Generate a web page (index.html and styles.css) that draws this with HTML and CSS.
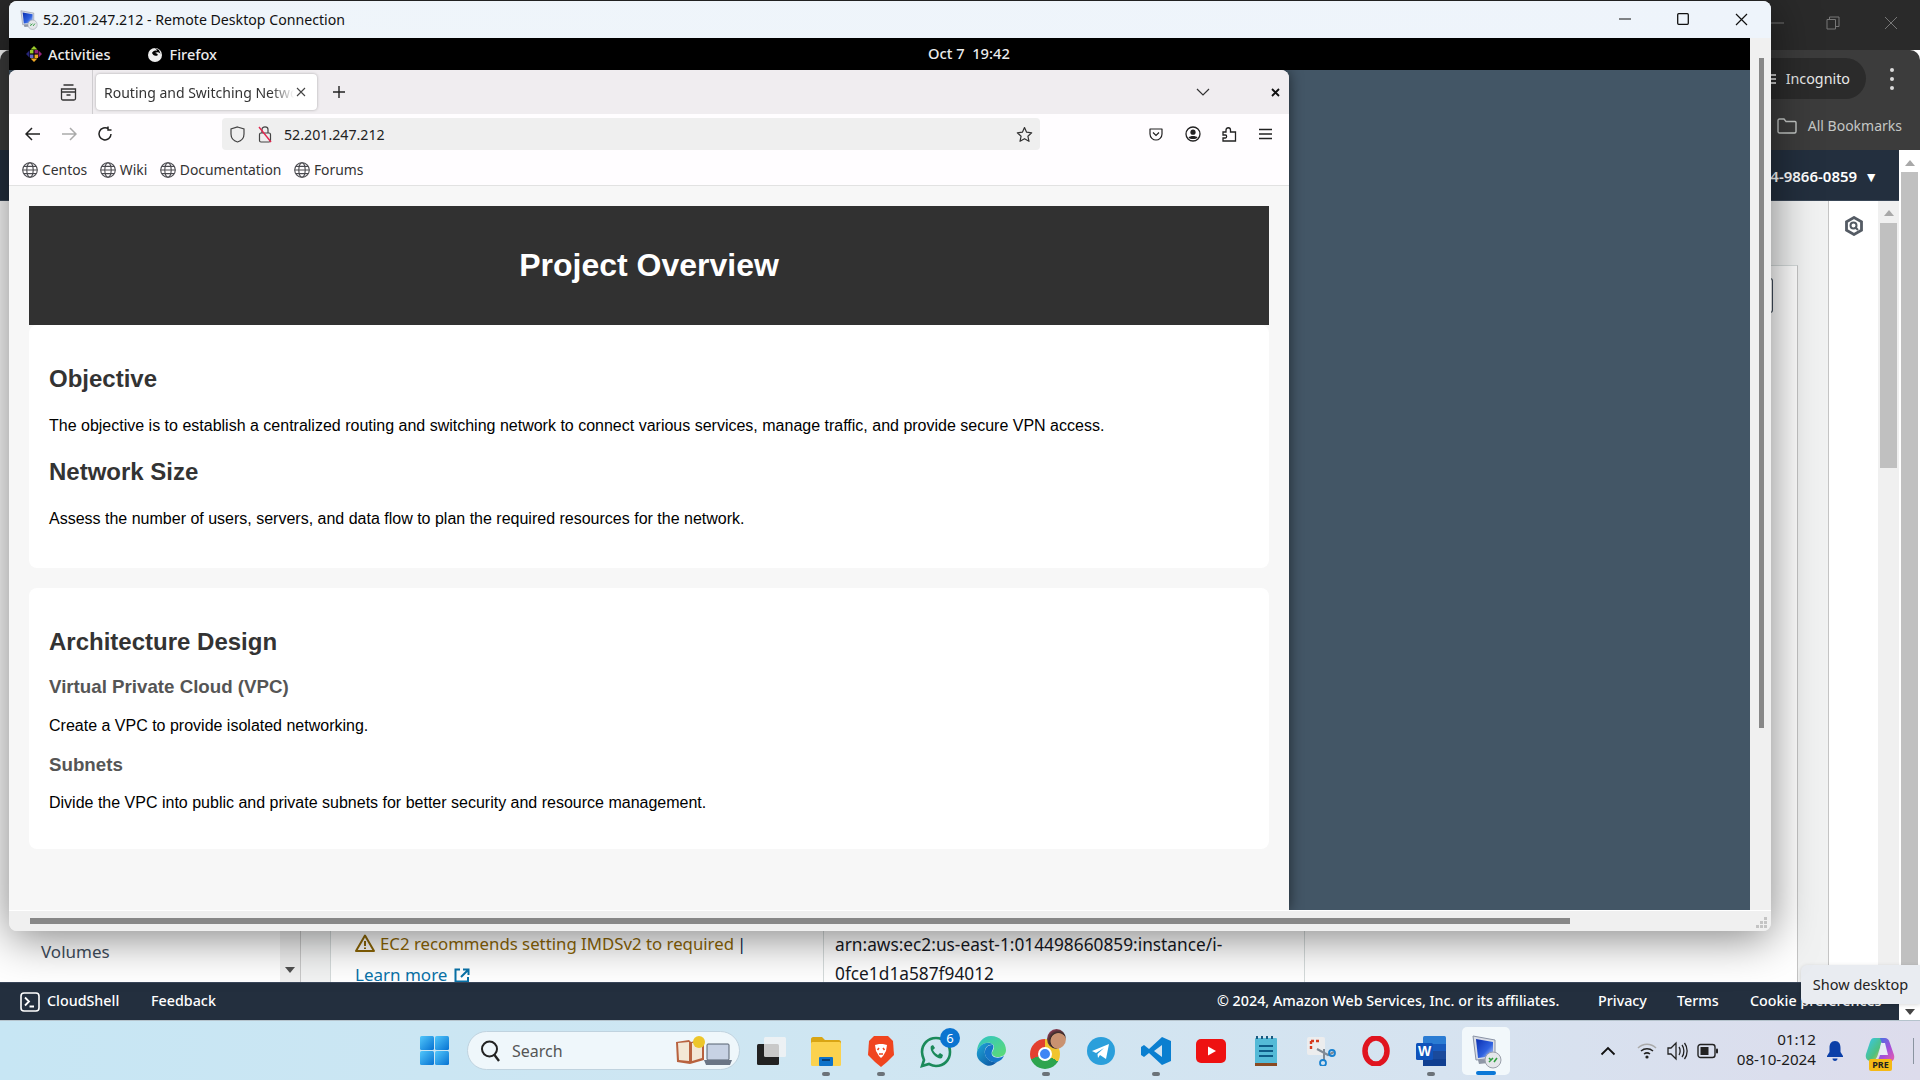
FILE: index.html
```html
<!DOCTYPE html>
<html lang="en">
<head>
<meta charset="utf-8">
<title>Remote Desktop</title>
<link rel="stylesheet" href="styles.css">
</head>
<body>
<svg class="defs" width="0" height="0">
  <defs>
    <linearGradient id="scr" x1="0" y1="0" x2="1" y2="1"><stop offset="0" stop-color="#0a2fb0"/><stop offset=".6" stop-color="#2f62e0"/><stop offset="1" stop-color="#cfdcf5"/></linearGradient>
    <linearGradient id="win" x1="0" y1="0" x2="1" y2="1"><stop offset="0" stop-color="#52c7fb"/><stop offset="1" stop-color="#0672d2"/></linearGradient>
    <linearGradient id="edgeA" x1="0" y1="0" x2="1" y2="1"><stop offset="0" stop-color="#1fa8d8"/><stop offset="1" stop-color="#0b4f9e"/></linearGradient>
    <linearGradient id="edgeB" x1="0" y1="0" x2="1" y2="1"><stop offset="0" stop-color="#2fc4c8"/><stop offset="1" stop-color="#5fdc70"/></linearGradient>
    <linearGradient id="copA" x1="0" y1="0" x2="1" y2="1"><stop offset="0" stop-color="#35c8f2"/><stop offset=".6" stop-color="#4fc07f"/><stop offset="1" stop-color="#f2c230"/></linearGradient>
    <linearGradient id="copB" x1="0" y1="0" x2="1" y2="1"><stop offset="0" stop-color="#2e7be6"/><stop offset=".6" stop-color="#a84fd8"/><stop offset="1" stop-color="#ec5fa8"/></linearGradient>
    <symbol id="rdp" viewBox="0 0 32 36">
      <path d="M3 3 L25 7 V25 L6 27 Z" fill="#d9dde6" stroke="#8a93a6" stroke-width="1"/>
      <path d="M6 6 L23 9 V23 L8 25 Z" fill="url(#scr)"/>
      <path d="M8 27 L18 26 V30 L9 31 Z" fill="#8f97a6"/>
      <circle cx="23" cy="27" r="8" fill="#e4e6ea" stroke="#9aa0aa"/>
      <path d="M19 29 L23 25 M24 29 L27 25 M19 25 L21 27" stroke="#2f9e3f" stroke-width="1.6" fill="none"/>
    </symbol>
    <symbol id="globe" viewBox="0 0 16 16">
      <g fill="none" stroke="#4a4a4f" stroke-width="1.1"><circle cx="8" cy="8" r="7.300"/><ellipse cx="8" cy="8" rx="3.200" ry="7.300"/><path d="M.7 8H15.300M1.800 4.400H14.200M1.800 11.600H14.200"/></g>
    </symbol>
  </defs>
</svg>

<div class="screen">
  <div class="chrome-top">
    <svg class="cw-min" width="14" height="2" viewBox="0 0 14 2"><path d="M0 1H14" stroke="#777"/></svg>
    <svg class="cw-res" width="14" height="14" viewBox="0 0 14 14"><path d="M1 3.5H9.5V13H1ZM3.5 3V1H13V10.5H10" fill="none" stroke="#777"/></svg>
    <svg class="cw-x" width="14" height="14" viewBox="0 0 14 14"><path d="M1 1L13 13M13 1L1 13" stroke="#777"/></svg>
  </div>
  <div class="chrome-bar">
    <div class="chrome-row1">
      <div class="incognito">
        <svg class="inc-ico" width="10" height="14" viewBox="0 0 10 14"><path d="M1 3H8M1 7H8M8 11H2" stroke="#c8c8c8" stroke-width="1.800"/></svg>
        <span>Incognito</span>
      </div>
      <div class="kebab"><i></i><i></i><i></i></div>
    </div>
    <div class="chrome-row2">
      <svg width="20" height="16" viewBox="0 0 20 16"><path d="M1 2.5C1 1.7 1.6 1 2.5 1H7L9 3.5H18C18.600 3.500 19 4 19 4.500V13.500C19 14.300 18.400 15 17.500 15H2.500C1.700 15 1 14.300 1 13.500Z" fill="none" stroke="#c4c7c5" stroke-width="1.400"/></svg>
      <span>All Bookmarks</span>
    </div>
  </div>

  <div class="mid">
    <div class="aws">
      <div class="aws-nav"><span>014-9866-0859</span><b class="caret">▼</b></div>
      <div class="aws-main">
        <aside class="side"><span class="side-item">Volumes</span></aside>
        <div class="side-sb"><b class="tri-down"></b></div>
        <div class="gutter"></div>
        <section class="content">
          <div class="table">
            <span class="edge-btn"></span>
            <div class="cell cell-a">
              <div class="warn">
                <svg width="20" height="18" viewBox="0 0 20 18"><path d="M10 1.500L19 17H1Z" fill="none" stroke="#8d6605" stroke-width="2" stroke-linejoin="round"/><path d="M10 7V12M10 13.500V15" stroke="#8d6605" stroke-width="2"/></svg>
                <span>EC2 recommends setting IMDSv2 to required</span><span class="pipe">|</span>
              </div>
              <div class="learn">Learn more
                <svg width="16" height="15" viewBox="0 0 16 15"><path d="M6 1.500H1.500V13.500H14V9M9 1.500H14.500V7M14 2L7 9" fill="none" stroke="#0972a8" stroke-width="2"/></svg>
              </div>
            </div>
            <div class="cell cell-b">arn:aws:ec2:us-east-1:014498660859:instance/i-<br>0fce1d1a587f94012</div>
            <div class="cell cell-c"></div>
          </div>
        </section>
        <aside class="tools">
          <svg width="20" height="20" viewBox="0 0 20 20"><path d="M10 1.500L17.500 5.700V14.300L10 18.500L2.500 14.300V5.700Z" fill="none" stroke="#545b64" stroke-width="2.800"/><circle cx="9.500" cy="9.500" r="3" fill="none" stroke="#545b64" stroke-width="2"/><path d="M11 11L14 14" stroke="#545b64" stroke-width="2"/></svg>
        </aside>
        <div class="inner-sb"><b class="tri-up"></b><i class="inner-thumb"></i></div>
      </div>
      <footer class="aws-foot">
        <svg width="20" height="20" viewBox="0 0 20 20"><rect x="1" y="1" width="18" height="18" rx="3" fill="none" stroke="#fff" stroke-width="1.600"/><path d="M5 5.500L9 9.500L5 13.500M9.500 14.500H14" fill="none" stroke="#fff" stroke-width="1.800"/></svg>
        <span class="f-cs">CloudShell</span>
        <span class="f-fb">Feedback</span>
        <span class="f-copy">© 2024, Amazon Web Services, Inc. or its affiliates.</span>
        <span class="f-pr">Privacy</span>
        <span class="f-te">Terms</span>
        <span class="f-co">Cookie preferences</span>
      </footer>
    </div>
    <div class="outer-sb"><b class="tri-up"></b><i class="outer-thumb"></i><b class="tri-down outer-down"></b></div>
  </div>

  <nav class="taskbar">
    <div class="slot start">
      <svg width="29" height="29" viewBox="0 0 29 29"><rect width="14" height="14" rx="1.500" fill="url(#win)"/><rect x="15" width="14" height="14" rx="1.500" fill="url(#win)"/><rect y="15" width="14" height="14" rx="1.500" fill="url(#win)"/><rect x="15" y="15" width="14" height="14" rx="1.500" fill="url(#win)"/></svg>
    </div>
    <div class="search">
      <svg width="22" height="24" viewBox="0 0 22 24"><circle cx="9.500" cy="10" r="7.500" fill="none" stroke="#222" stroke-width="2"/><path d="M14.500 16L19 22" stroke="#222" stroke-width="2.400"/></svg>
      <span class="search-text">Search</span>
      <svg class="search-art" width="58" height="32" viewBox="0 0 58 32">
        <path d="M1 7L14 5L16 7L29 4V25L15 29L2 27Z" fill="#b8623f"/><path d="M3 8L14 7V26L4 25ZM17 8L27 6V23L17 26Z" fill="#f3e7d5"/>
        <circle cx="24" cy="7" r="6" fill="#edc62a"/>
        <rect x="32" y="9" width="22" height="16" rx="1" fill="#c7d2e4" stroke="#55606f"/><path d="M29 25H57L55 30H31Z" fill="#6a7585"/>
      </svg>
    </div>
    <div class="slot taskview">
      <svg width="32" height="30" viewBox="0 0 32 30"><rect x="1" y="8" width="22" height="21" rx="1.500" fill="#222"/><rect x="8" y="1" width="22" height="20" rx="1.500" fill="#f4f4f4" fill-opacity=".8"/></svg>
    </div>
    <div class="slot run">
      <svg width="30" height="30" viewBox="0 0 30 30"><path d="M0 3C0 2 1 1 2 1H11L14 4H28C29 4 30 5 30 6V8H0Z" fill="#d9a514"/><rect y="6" width="30" height="24" rx="1.500" fill="#fbd24e"/><rect x="8" y="21" width="14" height="9" rx="1" fill="#0d72c9"/><rect x="11" y="23" width="8" height="2" fill="#073f75"/></svg>
    </div>
    <div class="slot run">
      <svg width="26" height="32" viewBox="0 0 26 32"><path d="M6 1H20L25 6L26 20L19 27L13 32L7 27L0 20L1 6Z" fill="#f0451f"/><path d="M7 10L11 9H15L19 10L18 16L15 21L13 23L11 21L8 16Z" fill="#fff"/><path d="M11 13L9.500 15M15 13L16.500 15M11 19H15" stroke="#f0451f" stroke-width="1.500"/></svg>
    </div>
    <div class="slot">
      <svg width="32" height="34" viewBox="0 0 32 34"><path d="M16 4C24 4 30 10 30 18C30 26 24 32 16 32C13 32 11 31 9 30L2 32L4 26C3 23.500 2 21 2 18C2 10 8 4 16 4Z" fill="none" stroke="#1b8a5a" stroke-width="2.600"/><path d="M11 12C10 14 11 18 14 21C17 24 20 25 22 24L23 21L20 19L18 21C16 20 14 18 13 16L15 14L13 11Z" fill="#1b8a5a"/></svg>
      <span class="badge">6</span>
    </div>
    <div class="slot">
      <svg width="30" height="32" viewBox="0 0 30 32"><path d="M15 1C24 1 30 8 30 15C30 20 26 22 22 22C18 22 16 20 16 18C16 16 18 15 18 12C18 9 14 7 10 8C5 9 2 13 1 17C1 8 7 1 15 1Z" fill="url(#edgeB)"/><path d="M1 17C2 13 5 9 10 8C13 7.500 16 8.500 17 10C11 9 8 14 9 19C10 24 15 28 21 27C17 31 12 32 8 29C3 26 0 22 1 17Z" fill="url(#edgeA)"/><path d="M9 19C8.500 14 11 9.500 17 10C18 12 17 14 16 16C15 19 16 22 20 22.500C23 23 26 22.500 28 20.500C27 24 24 26 21 27C15 28 10 24 9 19Z" fill="#1677c9"/></svg>
    </div>
    <div class="slot run">
      <span class="chrome-ico"><i class="chrome-dot"></i></span>
      <span class="avatar"></span>
    </div>
    <div class="slot">
      <svg width="28" height="28" viewBox="0 0 28 28"><circle cx="14" cy="14" r="14" fill="#2b9fdb"/><path d="M5 14L22 7L19 22L13 18L11 21L10.500 17L17 11L9 16Z" fill="#fff"/></svg>
    </div>
    <div class="slot run">
      <svg width="30" height="30" viewBox="0 0 30 30"><path d="M21 1L30 5V25L21 29L8 17L3 21L0 19V11L3 9L8 13ZM21 9L13 15L21 21Z" fill="#0a7fd0" fill-rule="evenodd"/></svg>
    </div>
    <div class="slot">
      <svg width="30" height="24" viewBox="0 0 30 24"><rect width="30" height="24" rx="5" fill="#ee1111"/><path d="M12 7.500L20 12L12 16.500Z" fill="#fff"/></svg>
    </div>
    <div class="slot">
      <svg width="22" height="30" viewBox="0 0 22 30"><rect y="2" width="22" height="28" rx="1" fill="#54bad7"/><rect y="27" width="22" height="3" fill="#8a4a22"/><path d="M2 0V3M7 0V3M12 0V3M17 0V3" stroke="#1a5a80" stroke-width="2"/><path d="M4 10H18M4 15H18M4 20H18" stroke="#0e5c88" stroke-width="2"/></svg>
    </div>
    <div class="slot">
      <svg width="30" height="30" viewBox="0 0 30 30"><rect x="1" y="1" width="18" height="18" rx="2" fill="#ecedee"/><path d="M5 5V14M5 5H14" stroke="#d63b1f" stroke-width="2.400" stroke-dasharray="3 2" fill="none"/><path d="M11 13L22 19L28 16M18 13V24" stroke="#7f8a96" stroke-width="2" fill="none"/><circle cx="26" cy="17" r="3" fill="none" stroke="#1a82d0" stroke-width="1.800"/><circle cx="17" cy="27" r="3" fill="none" stroke="#1a82d0" stroke-width="1.800"/></svg>
    </div>
    <div class="slot">
      <svg width="28" height="30" viewBox="0 0 28 30"><ellipse cx="14" cy="15" rx="11" ry="13" fill="none" stroke="#e0141f" stroke-width="5.500"/></svg>
    </div>
    <div class="slot run">
      <svg width="30" height="30" viewBox="0 0 30 30"><rect x="7" width="23" height="30" rx="1.500" fill="#2b7cd3"/><rect x="7" y="8" width="23" height="7" fill="#185abd"/><rect x="7" y="15" width="23" height="8" fill="#1a4a9c"/><rect x="7" y="23" width="23" height="7" fill="#103f91"/><rect y="7" width="17" height="17" rx="1.500" fill="#0f52ba"/><text x="8.500" y="20" class="w-letter">W</text></svg>
    </div>
    <div class="slot active">
      <svg width="32" height="36" viewBox="0 0 32 36"><use href="#rdp"/></svg>
      <i class="active-bar"></i>
    </div>

    <div class="tray">
      <div class="tr-chev"><svg width="16" height="10" viewBox="0 0 16 10"><path d="M1.500 8.500L8 2L14.500 8.500" fill="none" stroke="#111" stroke-width="1.800"/></svg></div>
      <div class="tr-wifi"><svg width="20" height="18" viewBox="0 0 20 18"><path d="M1 6C6 1 14 1 19 6" fill="none" stroke="#aaa" stroke-width="1.500"/><path d="M4 9C7.500 6 12.500 6 16 9M7 12C9 10.500 11 10.500 13 12" fill="none" stroke="#222" stroke-width="1.500"/><circle cx="10" cy="15" r="1.600" fill="#222"/></svg></div>
      <div class="tr-snd"><svg width="22" height="22" viewBox="0 0 22 22"><path d="M2 8H5L10 3V19L5 14H2Z" fill="none" stroke="#222" stroke-width="1.300"/><path d="M13 7C14.500 9 14.500 13 13 15M16 5C18.500 8 18.500 14 16 17M18.500 3C22 7.500 22 14.500 18.500 19" fill="none" stroke="#222" stroke-width="1.300"/></svg></div>
      <div class="tr-bat"><svg width="22" height="16" viewBox="0 0 22 16"><rect x="1" y="1.500" width="17" height="13" rx="2.500" fill="none" stroke="#222" stroke-width="1.400"/><rect x="3.500" y="4" width="8" height="8" fill="#222"/><rect x="19" y="5.500" width="2" height="5" rx="1" fill="#222"/></svg></div>
      <div class="clock"><span>01:12</span><span>08-10-2024</span></div>
      <div class="tr-bell"><svg width="18" height="22" viewBox="0 0 18 22"><path d="M9 1C5 1 3.500 4 3.500 8V12L1 16V17H17V16L14.500 12V8C14.500 4 13 1 9 1Z" fill="#0b3fa8"/><path d="M6.500 18.500H11.500C11.500 20 10.500 21 9 21C7.500 21 6.500 20 6.500 18.500Z" fill="#0b3fa8"/></svg></div>
      <div class="tr-copilot">
        <svg width="30" height="30" viewBox="0 0 30 30"><path d="M9 2H18L13 18C12 22 10 25 6 25C2 25 0 22 1 18L5 6C6 3.500 7 2 9 2Z" fill="url(#copA)"/><path d="M15 2H20C22 2 23.500 3 24.500 6L29 19C30 23 28 26 24 26H10C13 25 14 22 15 19H21Z" fill="url(#copB)"/><path d="M16 7H20L23 19H14Z" fill="#e8ebf6"/></svg>
        <span class="pre">PRE</span>
      </div>
      <i class="tr-line"></i>
    </div>
  </nav>
</div>

<div class="tooltip">Show desktop</div>

<div class="rdp">
  <div class="rdp-title">
    <svg width="19" height="21" viewBox="0 0 32 36"><use href="#rdp"/></svg>
    <span class="rdp-name">52.201.247.212 - Remote Desktop Connection</span>
    <svg class="rw-min" width="12" height="2" viewBox="0 0 12 2"><path d="M0 1H12" stroke="#111" stroke-width="1.200"/></svg>
    <svg class="rw-max" width="12" height="12" viewBox="0 0 12 12"><rect x=".7" y=".7" width="10.600" height="10.600" rx="1" fill="none" stroke="#111" stroke-width="1.300"/></svg>
    <svg class="rw-x" width="13" height="13" viewBox="0 0 13 13"><path d="M1 1L12 12M12 1L1 12" stroke="#111" stroke-width="1.200"/></svg>
  </div>
  <div class="rdp-body">
    <div class="viewport">
      <div class="gnome">
        <div class="gnome-left">
          <svg width="16" height="16" viewBox="0 0 14 14"><path d="M7 0L10 3H4Z" fill="#9ccd2a"/><path d="M14 7L11 10V4Z" fill="#932279"/><path d="M7 14L4 11H10Z" fill="#efa724"/><path d="M0 7L3 4V10Z" fill="#262577"/><rect x="3.500" y="3.500" width="3" height="3" fill="#9ccd2a"/><rect x="7.500" y="3.500" width="3" height="3" fill="#932279"/><rect x="3.500" y="7.500" width="3" height="3" fill="#6a69c7"/><rect x="7.500" y="7.500" width="3" height="3" fill="#efa724"/></svg>
          <span class="act">Activities</span>
          <svg class="ff-ico" width="16" height="16" viewBox="0 0 16 16"><circle cx="8" cy="9" r="7" fill="#eee"/><path d="M5 1C8 2 10 3 10 5C8 4 6 5 5 7C6 9 8 11 11 9C10 7 8 7 8 7C11 5 14 7 14 9L12 4L8 2Z" fill="#000"/></svg>
          <span class="ff-name">Firefox</span>
        </div>
        <div class="gnome-clock">Oct 7&nbsp; 19:42</div>
      </div>
      <div class="desktop">
        <div class="firefox">
          <div class="tabs">
            <div class="tabs-side">
              <svg width="17" height="17" viewBox="0 0 17 17"><path d="M3.500 1H13.500M1.500 5H15.500V14.500C15.500 15.300 15 16 14 16H3C2 16 1.500 15.300 1.500 14.500ZM1.500 8H15.500M6.500 11H10.500" fill="none" stroke="#333" stroke-width="1.300"/></svg>
            </div>
            <div class="tab">
              <span class="tab-title">Routing and Switching Network</span>
              <svg width="10" height="10" viewBox="0 0 10 10"><path d="M1 1L9 9M9 1L1 9" stroke="#444" stroke-width="1.100"/></svg>
            </div>
            <svg class="tab-new" width="14" height="14" viewBox="0 0 14 14"><path d="M7 1V13M1 7H13" stroke="#222" stroke-width="1.400"/></svg>
            <svg class="tab-list" width="14" height="8" viewBox="0 0 14 8"><path d="M1 1L7 7L13 1" fill="none" stroke="#333" stroke-width="1.200"/></svg>
            <svg class="tab-close" width="9" height="9" viewBox="0 0 9 9"><path d="M1 1L8 8M8 1L1 8" stroke="#111" stroke-width="1.800"/></svg>
          </div>
          <div class="toolbar">
            <svg class="tb-back" width="16" height="14" viewBox="0 0 16 14"><path d="M7 1L1 7L7 13M1 7H15" fill="none" stroke="#222" stroke-width="1.500"/></svg>
            <svg class="tb-fwd" width="16" height="14" viewBox="0 0 16 14"><path d="M9 1L15 7L9 13M15 7H1" fill="none" stroke="#aaa" stroke-width="1.500"/></svg>
            <svg class="tb-rel" width="16" height="16" viewBox="0 0 16 16"><path d="M14 8A6 6 0 1 1 11.500 3M11 .5V4H14.500" fill="none" stroke="#222" stroke-width="1.500"/></svg>
            <div class="urlbar">
              <svg width="15" height="17" viewBox="0 0 15 17"><path d="M7.500 1L14 3V8C14 12 11 15 7.500 16C4 15 1 12 1 8V3Z" fill="none" stroke="#444" stroke-width="1.200"/></svg>
              <svg class="url-lock" width="14" height="18" viewBox="0 0 14 18"><rect x="1.500" y="8" width="11" height="9" rx="1.500" fill="none" stroke="#444" stroke-width="1.200"/><path d="M4 8V4.500C4 1 10 1 10 4.500V8" fill="none" stroke="#444" stroke-width="1.200"/><path d="M1 2L13 17" stroke="#e22850" stroke-width="1.400"/></svg>
              <span class="url-text">52.201.247.212</span>
              <svg class="url-star" width="17" height="17" viewBox="0 0 17 17"><path d="M8.500 1.500L10.600 6.200L15.700 6.800L11.900 10.200L13 15.300L8.500 12.700L4 15.300L5.100 10.200L1.300 6.800L6.400 6.200Z" fill="none" stroke="#333" stroke-width="1.200" stroke-linejoin="round"/></svg>
            </div>
            <svg class="tb-i1" width="14" height="14" viewBox="0 0 14 14"><path d="M1 2H13V7C13 10.500 10 13 7 13C4 13 1 10.500 1 7Z" fill="none" stroke="#222" stroke-width="1.200" stroke-linejoin="round"/><path d="M4 5.500L7 8.500L10 5.500" fill="none" stroke="#222" stroke-width="1.200"/></svg>
            <svg class="tb-i2" width="16" height="16" viewBox="0 0 16 16"><circle cx="8" cy="8" r="7" fill="none" stroke="#222" stroke-width="1.300"/><circle cx="8" cy="6.200" r="2.600" fill="#222"/><path d="M3.500 11.500C5 9.500 11 9.500 12.500 11.500C11 13.500 5 13.500 3.500 11.500Z" fill="#222"/></svg>
            <svg class="tb-i3" width="15" height="16" viewBox="0 0 15 16"><path d="M1 6H4V4C4 1 8.500 1 8.500 4V6H13.500V15H1V12H3.500C5 12 5 9 3.500 9H1Z" fill="none" stroke="#222" stroke-width="1.300"/></svg>
            <svg class="tb-i4" width="13" height="12" viewBox="0 0 13 12"><path d="M0 1.500H13M0 6H13M0 10.500H13" stroke="#222" stroke-width="1.300"/></svg>
          </div>
          <div class="bookmarks">
            <span class="bm"><svg width="16" height="16"><use href="#globe"/></svg>Centos</span>
            <span class="bm"><svg width="16" height="16"><use href="#globe"/></svg>Wiki</span>
            <span class="bm"><svg width="16" height="16"><use href="#globe"/></svg>Documentation</span>
            <span class="bm"><svg width="16" height="16"><use href="#globe"/></svg>Forums</span>
          </div>
          <main class="page">
            <header class="hero"><h1>Project Overview</h1></header>
            <section class="card card-first">
              <h2>Objective</h2>
              <p>The objective is to establish a centralized routing and switching network to connect various services, manage traffic, and provide secure VPN access.</p>
              <h2>Network Size</h2>
              <p>Assess the number of users, servers, and data flow to plan the required resources for the network.</p>
            </section>
            <section class="card">
              <h2>Architecture Design</h2>
              <h3>Virtual Private Cloud (VPC)</h3>
              <p>Create a VPC to provide isolated networking.</p>
              <h3>Subnets</h3>
              <p>Divide the VPC into public and private subnets for better security and resource management.</p>
            </section>
          </main>
        </div>
      </div>
    </div>
    <div class="rdp-vs"><i class="rdp-vthumb"></i></div>
  </div>
  <div class="rdp-hs">
    <i class="rdp-hthumb"></i>
    <svg class="grip" width="12" height="12" viewBox="0 0 12 12"><path d="M8 0H11V3H8ZM4 4H7V7H4ZM8 4H11V7H8ZM0 8H3V11H0ZM4 8H7V11H4ZM8 8H11V11H8Z" fill="#c4c4c4"/></svg>
  </div>
</div>
</body>
</html>
```
FILE: styles.css
```css
* { box-sizing: border-box; }
html, body { margin: 0; padding: 0; width: 1920px; height: 1080px; overflow: hidden; }
body { font-family: "Noto Sans", "Liberation Sans", sans-serif; position: relative; background: #fff; }
.defs { position: absolute; }
i, b { display: block; }

.screen { width: 1920px; height: 1080px; display: flex; flex-direction: column; }

/* background Chrome */
.chrome-top { height: 50px; background: #2a2a2a; display: flex; align-items: center; padding-bottom: 4px; justify-content: flex-end; flex: none; }
.cw-min { margin-right: 42px; }
.cw-res { margin-right: 44px; }
.cw-x { margin-right: 22px; }
.chrome-bar { height: 100px; background: #3c3c3c; border-radius: 10px 10px 0 0; flex: none; padding-top: 8px; }
.chrome-row1 { display: flex; justify-content: flex-end; align-items: center; height: 41px; padding-right: 26px; }
.incognito { height: 41px; width: 180px; background: #2b2b2b; border-radius: 21px; color: #e8e8e8; font-size: 14.300px; display: flex; align-items: center; justify-content: flex-end; padding-right: 16px; margin-right: 24px; }
.inc-ico { margin-right: 8px; }
.kebab { display: flex; flex-direction: column; gap: 5px; }
.kebab i { width: 4px; height: 4px; border-radius: 50%; background: #dcdcdc; }
.chrome-row2 { display: flex; justify-content: flex-end; align-items: center; gap: 11px; height: 39px; padding-right: 18px; margin-top: 7px; color: #c4c7c5; font-size: 14px; }

.mid { flex: 1; display: flex; min-height: 0; }
.aws { width: 1899px; display: flex; flex-direction: column; }
.aws-nav { height: 51px; background: #232f3e; border-bottom: 1px solid #3a4757; display: flex; align-items: center; justify-content: flex-end; padding-right: 21px; color: #fff; font-size: 15px; font-weight: 600; flex: none; padding-top: 2px; }
.caret { font-size: 14px; margin-left: 7px; font-weight: 400; }
.aws-main { flex: 1; display: flex; min-height: 0; background: #fff; }
.side { width: 280px; padding: 739px 0 0 41px; background: #fff; color: #414d5c; font-size: 17px; }
.side-sb { width: 20px; background: #f0f0f0; position: relative; display: flex; justify-content: center; align-items: flex-end; padding-bottom: 9px; }
.tri-down { width: 0; height: 0; border-left: 5px solid transparent; border-right: 5px solid transparent; border-top: 6px solid #505050; }
.tri-up { width: 0; height: 0; border-left: 5px solid transparent; border-right: 5px solid transparent; border-bottom: 6px solid #a8a8a8; }
.gutter { width: 30px; background: #f2f3f3; border-left: 1px solid #c8c8c8; }
.content { width: 1498px; background: #f1f2f2; padding: 64px 30px 0 0; }
.table { height: 100%; background: #fff; border: 1px solid #d5dbdb; border-bottom: 0; border-right: 1px solid #c4c4c4; display: flex; overflow: hidden; position: relative; }
.edge-btn { position: absolute; left: 1438px; top: 12px; width: 4px; height: 35px; border: 1px solid #414d5c; border-left: 0; border-radius: 0 3px 3px 0; }
.cell { padding-top: 664px; color: #16191f; font-size: 16.800px; }
.cell-a { width: 492px; padding-left: 24px; }
.warn { display: flex; align-items: center; gap: 5px; color: #8d6605; height: 26px; white-space: nowrap; }
.pipe { color: #0a2a4a; margin-left: -2px; }
.learn { color: #0972a8; margin-top: 6px; display: flex; align-items: center; gap: 7px; line-height: 26px; font-size: 17px; }
.cell-b { width: 481px; border-left: 1px solid #d5dbdb; padding-left: 11px; line-height: 29px; white-space: nowrap; font-size: 17.300px; }
.cell-c { flex: 1; border-left: 1px solid #d5dbdb; }
.tools { width: 50px; background: #fff; border-left: 1px solid #c4c4c4; display: flex; justify-content: center; padding-top: 15px; }
.inner-sb { width: 21px; background: #f0f0f0; padding: 9px 2px 0; display: flex; flex-direction: column; align-items: center; }
.inner-thumb { width: 17px; height: 245px; background: #c0c0c0; margin-top: 7px; }
.aws-foot { height: 38px; flex: none; background: #232f3e; color: #fff; display: flex; align-items: center; font-size: 14.300px; font-weight: 500; border-top: 1px solid #39465a; padding-left: 20px; padding-bottom: 2px; white-space: nowrap; }
.aws-foot svg { margin-top: 2px; }
.f-cs { margin-left: 7px; width: 104px; }
.f-fb { width: 1066px; }
.f-copy { width: 381px; }
.f-pr { width: 79px; }
.f-te { width: 73px; }

.outer-sb { width: 21px; background: #fff; padding: 10px 2px 0 2px; display: flex; flex-direction: column; align-items: center; position: relative; }
.outer-sb .outer-thumb { width: 17px; height: 810px; background: #c0c0c0; margin-top: 6px; }
.outer-down { margin-top: 27px; border-top-color: #444; }

/* taskbar */
.taskbar { height: 60px; flex: none; border-top: 1px solid #b5c3cc; background: linear-gradient(90deg, #c7e6f4 0%, #cfe6f2 45%, #d6e3f0 75%, #dddcec 100%); display: flex; align-items: center; padding-left: 407px; }
.slot { width: 55px; height: 48px; display: flex; align-items: center; justify-content: center; position: relative; flex: none; }
.start { width: 54px; }
.taskview { width: 53px; margin-left: 5px; }
.run::after { content: ""; position: absolute; left: 24px; bottom: -1px; width: 8px; height: 4px; border-radius: 2px; background: #6b7278; }
.search { width: 273px; height: 39px; margin-left: 6px; border-radius: 20px; background: #eff7fb; border: 1px solid #c0d3df; display: flex; align-items: center; padding-left: 12px; flex: none; }
.search-text { font-size: 16px; color: #555; margin-left: 10px; }
.search-art { margin-left: auto; margin-right: 6px; }
.badge { position: absolute; top: 1px; right: 3px; width: 20px; height: 20px; border-radius: 50%; background: #0b74d0; color: #fff; font-size: 13px; display: flex; align-items: center; justify-content: center; }
.chrome-ico { width: 30px; height: 30px; border-radius: 50%; background: conic-gradient(#f0c52f 0 120deg, #2da44e 120deg 250deg, #e3402f 250deg 360deg); display: flex; align-items: center; justify-content: center; margin-top: 6px; margin-right: 1px; }
.chrome-dot { width: 14px; height: 14px; border-radius: 50%; background: #3f86f5; border: 2px solid #fff; }
.avatar { position: absolute; top: 2px; right: 7px; width: 19px; height: 20px; border-radius: 50%; background: radial-gradient(circle at 60% 60%, #c99271 0 45%, #3a2d2a 50%, #e04c7c 100%); }
.active { background: #f2f8fb; border-radius: 5px; width: 48px; margin-left: 4px; }
.active-bar { position: absolute; left: 14px; bottom: 0; width: 20px; height: 4px; border-radius: 2px; background: #0b78d7; }
.w-letter { font-family: "Liberation Sans", sans-serif; font-size: 14px; font-weight: 700; fill: #fff; text-anchor: middle; }
.tray { position: absolute; right: 0; display: flex; align-items: center; height: 48px; width: 330px; padding-right: 6px; }
.tray > div { display: flex; justify-content: center; align-items: center; flex: none; }
.tr-chev { width: 36px; }
.tr-wifi { width: 30px; margin-left: 6px; }
.tr-snd { width: 30px; }
.tr-bat { width: 32px; }
.tray .clock { width: 92px; flex-direction: column; align-items: flex-end; font-size: 15.200px; line-height: 20px; color: #1b1b1b; padding-bottom: 4px; }
.tr-bell { width: 38px; }
.tray .tr-copilot { width: 52px; margin-right: 4px; position: relative; height: 40px; }
.pre { position: absolute; left: 15px; bottom: 0; width: 23px; height: 12px; border-radius: 2px; background: #f5b915; color: #222; font-size: 9px; font-weight: 700; line-height: 12px; text-align: center; }
.tr-line { width: 1px; height: 26px; background: #8a94a0; margin-left: 3px; }

.tooltip { position: absolute; left: 1801px; top: 965px; width: 119px; height: 39px; background: #e9ecf1; border-radius: 6px 0 0 6px; color: #222; font-size: 14.500px; padding-bottom: 2px; display: flex; align-items: center; justify-content: center; box-shadow: 0 1px 4px rgba(0,0,0,.15); }

/* RDP window */
.rdp { position: absolute; left: 9px; top: 1px; width: 1762px; height: 930px; border-radius: 8px; overflow: hidden; background: #f0f0f0; display: flex; flex-direction: column; box-shadow: 0 6px 46px rgba(0,0,0,.5); }
.rdp-title { height: 37px; flex: none; background: linear-gradient(90deg, #eff5fa, #eef4fb); display: flex; align-items: center; padding-left: 10px; padding-bottom: 1px; color: #111; font-size: 14.150px; }
.rdp-name { margin-left: 5px; }
.rw-min { margin-left: auto; }
.rw-max { margin-left: 46px; }
.rw-x { margin-left: 46px; margin-right: 23px; }
.rdp-body { flex: 1; min-height: 0; display: flex; }
.viewport { width: 1741px; display: flex; flex-direction: column; }
.gnome { height: 32px; flex: none; background: #000; color: #ececec; font-size: 14.500px; font-weight: 500; position: relative; display: flex; align-items: center; padding-bottom: 1px; }
.gnome-left { display: flex; align-items: center; padding-left: 17px; }
.act { margin-left: 6px; }
.ff-ico { margin-left: 37px; }
.ff-name { margin-left: 6px; }
.gnome-clock { position: absolute; left: 919px; top: 0; line-height: 31px; font-size: 14.700px; }
.desktop { flex: 1; min-height: 0; background: #435666; display: flex; overflow: hidden; }
.firefox { width: 1280px; background: #f7f7f7; border-radius: 8px 8px 0 0; display: flex; flex-direction: column; box-shadow: 0 0 14px rgba(0,0,0,.55); overflow: hidden; }
.tabs { height: 44px; flex: none; background: #f0edf0; display: flex; align-items: center; position: relative; }
.tabs-side { width: 84px; height: 44px; border-right: 1px solid #cfcdd0; display: flex; align-items: center; justify-content: flex-end; padding-right: 15px; flex: none; }
.tab { width: 221px; height: 36px; margin-left: 3px; background: #fff; border-radius: 4px; box-shadow: 0 0 3px rgba(0,0,0,.3); display: flex; align-items: center; padding-left: 8px; font-size: 14px; color: #333; flex: none; }
.tab-title { width: 190px; overflow: hidden; white-space: nowrap; -webkit-mask-image: linear-gradient(90deg, #000 88%, transparent 100%); mask-image: linear-gradient(90deg, #000 88%, transparent 100%); flex: none; margin-right: 2px; }
.tab-new { margin-left: 15px; }
.tab-list { margin-left: auto; }
.tab-close { margin-left: 61px; margin-right: 9px; }
.toolbar { height: 40px; flex: none; background: #fffdff; display: flex; align-items: center; padding-left: 16px; }
.tb-fwd { margin-left: 20px; }
.tb-rel { margin-left: 20px; }
.urlbar { width: 818px; height: 32px; margin-left: 109px; background: #efefef; border-radius: 4px; display: flex; align-items: center; padding-left: 8px; color: #222; font-size: 14.200px; flex: none; }
.url-lock { margin-left: 13px; }
.url-text { margin-left: 12px; }
.url-star { margin-left: auto; margin-right: 7px; }
.tb-i1 { margin-left: 109px; }
.tb-i2 { margin-left: 22px; }
.tb-i3 { margin-left: 21px; }
.tb-i4 { margin-left: 22px; }
.bookmarks { height: 32px; flex: none; background: #fffdff; border-bottom: 1px solid #e2e2e2; display: flex; align-items: center; padding-left: 13px; font-size: 13.900px; color: #333; gap: 12.500px; }
.bm { display: flex; align-items: center; gap: 4px; height: 22px; }
.page { flex: 1; min-height: 0; padding: 20px; font-family: "Liberation Sans", Arial, sans-serif; background: #f7f7f7; overflow: hidden; }
.hero { height: 119px; background: #313131; color: #fff; display: flex; align-items: center; justify-content: center; }
h1 { margin: 0; font-size: 32px; font-weight: 700; }
.card { background: #fff; border-radius: 8px; padding: 20px; margin-bottom: 20px; }
.card-first p:last-child { margin-bottom: 16px; }
.card p:last-child { margin-bottom: 13px; }
.card.card-first p:last-child { margin-bottom: 16px; }
h2 { margin: 20px 0 21px; font-size: 24px; line-height: 27px; font-weight: 700; color: #333; }
p + h2 { margin-top: 19px; }
h3 { margin: 15px 0 14.500px; font-size: 18.720px; line-height: 22px; font-weight: 700; color: #555; }
h2 + h3 { margin-top: 21px; }
p { margin: 14px 0; font-size: 16px; line-height: 26px; color: #000; }

.rdp-vs { flex: 1; background: #f0f0f0; padding: 20px 0 0 9px; }
.rdp-vthumb { width: 5px; height: 670px; background: #888; }
.rdp-hs { height: 21px; flex: none; background: #f0f0f0; border-top: 1px solid #fff; padding: 7px 0 0 21px; position: relative; }
.rdp-hthumb { width: 1540px; height: 6px; background: #888; }
.grip { position: absolute; right: 3px; bottom: 2px; }
```
